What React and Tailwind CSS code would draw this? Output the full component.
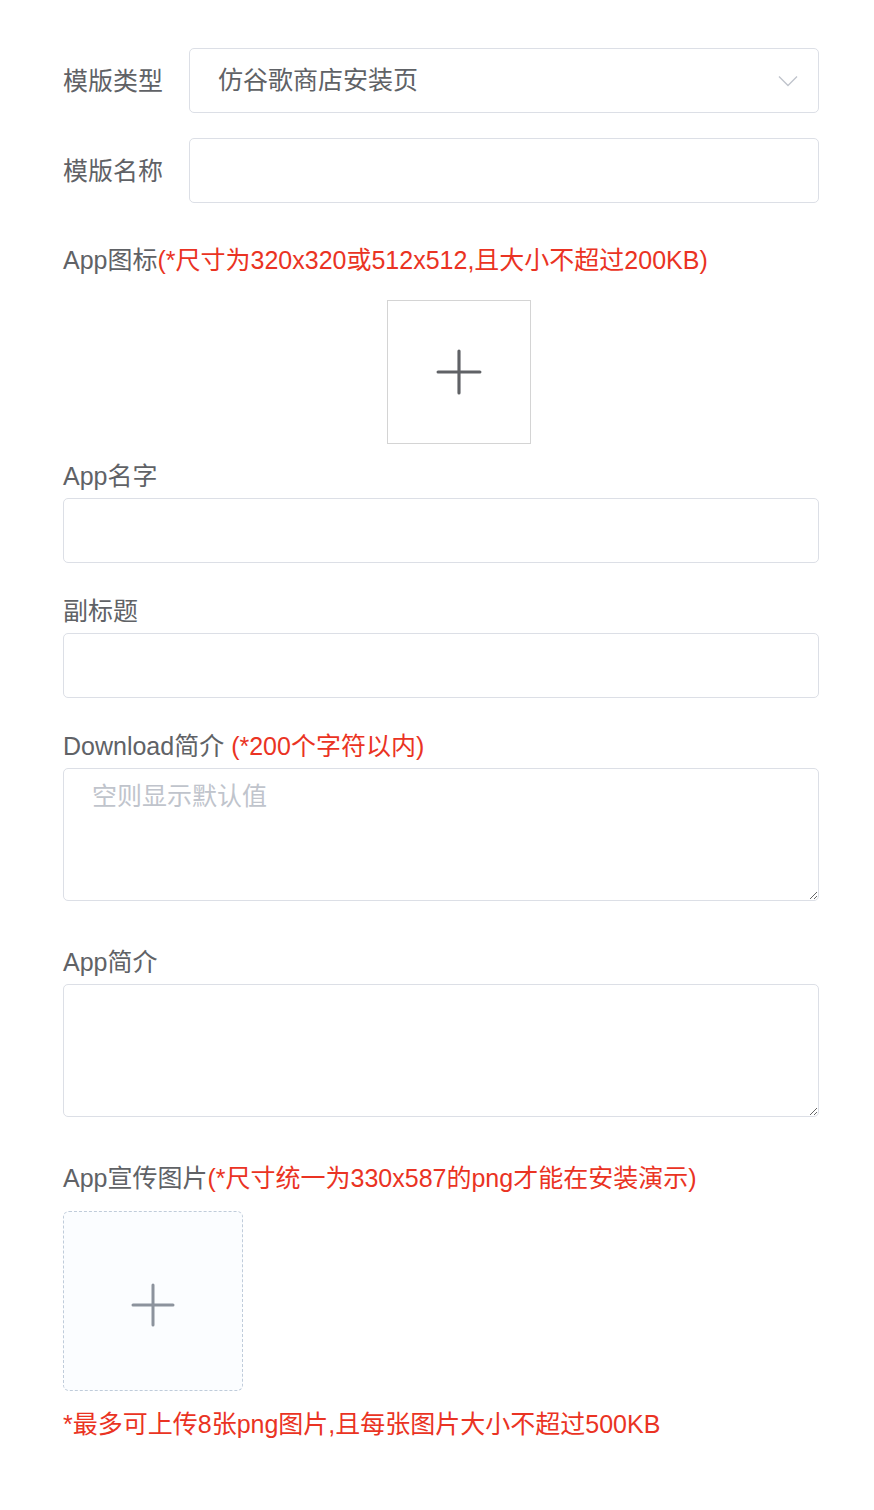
import React from "react";

const font = { fontFamily: '"Liberation Sans", "Noto Sans CJK SC", sans-serif' };

function Label({ children, note, className = "" }) {
  return (
    <div className={"text-[25px] leading-[36px] text-[#606266] " + className}>
      {children}
      {note && <span className="text-[#ea3323]">{note}</span>}
    </div>
  );
}

function Plus({ size, color, stroke }) {
  return (
    <svg width={size} height={size} viewBox="0 0 44 44" fill="none">
      <path d="M22 2v40M2 22h40" stroke={color} strokeWidth={stroke} strokeLinecap="round" />
    </svg>
  );
}

export default function App() {
  return (
    <div className="min-h-[1510px] bg-white pl-[63px] pr-[55px] pt-[48px]" style={font}>
      <div className="flex items-center">
        <div className="w-[126px] text-[25px] leading-[36px] text-[#606266]">模版类型</div>
        <div className="flex h-[65px] flex-1 items-center justify-between rounded-[5px] border border-[#dcdfe6] pl-[28px] pr-[20px]">
          <span className="text-[25px] text-[#606266]">仿谷歌商店安装页</span>
          <svg width="20" height="12" viewBox="0 0 20 12" fill="none">
            <path d="M1 1.5l9 9 9-9" stroke="#c0c4cc" strokeWidth="1.4" />
          </svg>
        </div>
      </div>

      <div className="mt-[25px] flex items-center">
        <div className="w-[126px] text-[25px] leading-[36px] text-[#606266]">模版名称</div>
        <input className="h-[65px] flex-1 rounded-[5px] border border-[#dcdfe6] px-[28px] text-[25px] outline-none" />
      </div>

      <Label className="mt-[39px]" note="(*尺寸为320x320或512x512,且大小不超过200KB)">App图标</Label>
      <div className="ml-[324px] mt-[22px] flex h-[144px] w-[144px] items-center justify-center border border-[#d4d4d4]">
        <Plus size={46} color="#606266" stroke={3} />
      </div>

      <Label className="mt-[14px]">App名字</Label>
      <input className="mt-[4px] block h-[65px] w-full rounded-[5px] border border-[#dcdfe6] px-[28px] text-[25px] outline-none" />

      <Label className="mt-[30px]">副标题</Label>
      <input className="mt-[4px] block h-[65px] w-full rounded-[5px] border border-[#dcdfe6] px-[28px] text-[25px] outline-none" />

      <Label className="mt-[30px]" note=" (*200个字符以内)">Download简介</Label>
      <textarea
        placeholder="空则显示默认值"
        className="mt-[4px] block h-[133px] w-full rounded-[5px] border border-[#dcdfe6] px-[28px] py-[9px] text-[25px] leading-[36px] text-[#606266] outline-none placeholder:text-[#c0c4cc]"
      />

      <Label className="mt-[43px]">App简介</Label>
      <textarea className="mt-[4px] block h-[133px] w-full rounded-[5px] border border-[#dcdfe6] px-[28px] py-[9px] text-[25px] leading-[36px] text-[#606266] outline-none" />

      <Label className="mt-[43px]" note="(*尺寸统一为330x587的png才能在安装演示)">App宣传图片</Label>
      <div className="mt-[15px] flex h-[180px] w-[180px] items-center justify-center rounded-[6px] border border-dashed border-[#c0ccda] bg-[#fbfdff] pt-[8px]">
        <Plus size={44} color="#8c939d" stroke={3} />
      </div>

      <div className="mt-[15px] text-[25px] leading-[36px] text-[#ea3323]">
        *最多可上传8张png图片,且每张图片大小不超过500KB
      </div>
    </div>
  );
}
